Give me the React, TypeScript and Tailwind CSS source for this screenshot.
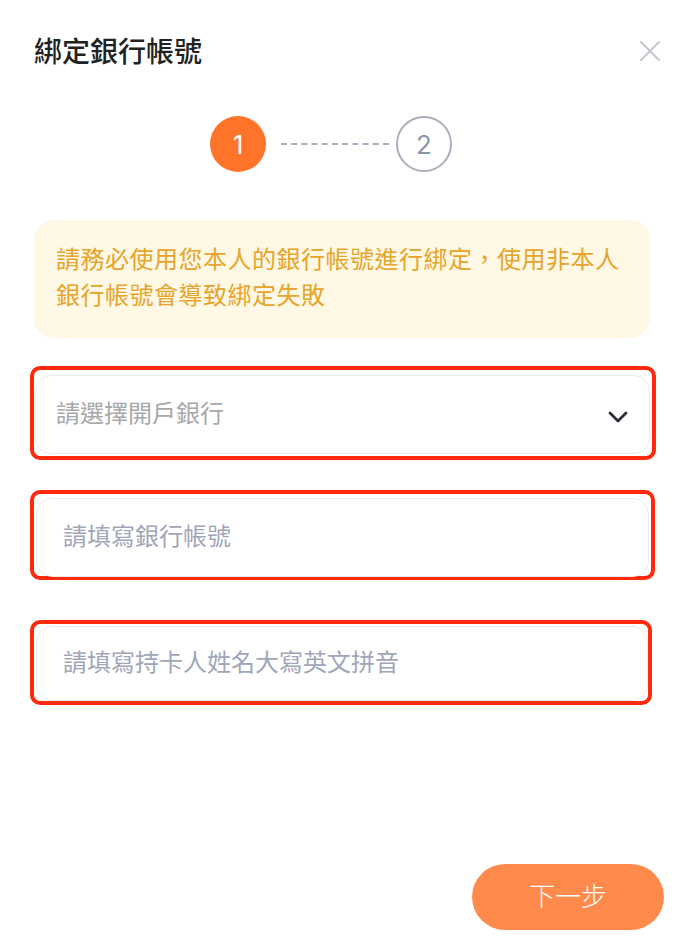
const cjk = { fontFamily: '"Noto Sans CJK TC", "Noto Sans", sans-serif' };

function Stepper() {
  return (
    <div className="flex items-center ml-[176px] mt-[48px] h-[56px]">
      <div className="w-[56px] h-[56px] rounded-full bg-[#ff7429] flex items-center justify-center text-white text-[26px] font-['Inter',sans-serif]">
        1
      </div>
      <div className="ml-[15px] mr-[7px] w-[108px] border-t-2 border-dashed border-[#a9afc0]" />
      <div className="w-[56px] h-[56px] rounded-full border-2 border-[#a9afc0] flex items-center justify-center text-[#8e95a9] text-[26px] font-['Inter',sans-serif]">
        2
      </div>
    </div>
  );
}

export default function App() {
  return (
    <div className="w-[675px] h-[941px] bg-white flex flex-col overflow-hidden" style={cjk}>
      <div className="px-[34px]">
        <div className="flex items-center justify-between pt-[36px] h-[68px] w-[626px]">
          <h1 className="text-[28px] leading-[32px] font-medium text-[#222] mt-[-4px]">綁定銀行帳號</h1>
          <svg width="20" height="20" viewBox="0 0 20 20" className="mt-[-2px]">
            <path d="M1 1 L19 19 M19 1 L1 19" stroke="#c3c7cf" strokeWidth="2" strokeLinecap="round" />
          </svg>
        </div>

        <Stepper />

        <div className="mt-[48px] w-[616px] h-[118px] rounded-[20px] bg-[#fef8e4] px-[22px] pt-[20px] text-[24px] leading-[36px] tracking-[0.5px] text-[#e6a42a]">
          請務必使用您本人的銀行帳號進行綁定，使用非本人銀行帳號會導致綁定失敗
        </div>

        <div className="mt-[28px] ml-[-4px] w-[626px] h-[94px] border-4 border-[#ff2a0e] rounded-[10px] pl-[1px] pt-[5px]">
          <div className="w-[615px] h-[79px] border border-[#ebebeb] rounded-[16px] flex items-center justify-between pl-[20px] pr-[21px]">
            <span className="text-[24px] text-[#a8a8a8] mb-[6px]">請選擇開戶銀行</span>
            <svg width="20" height="12" viewBox="0 0 20 12" className="mt-[4px]">
              <path d="M2 2 L10 10 L18 2" fill="none" stroke="#2b2f36" strokeWidth="2.8" strokeLinecap="round" strokeLinejoin="round" />
            </svg>
          </div>
        </div>

        <div className="mt-[30px] ml-[-4px] w-[625px] h-[90px] border-4 border-[#ff2a0e] rounded-[10px] pl-[2px] pt-[4px]">
          <div className="w-[613px] h-[79px] border border-[#ebebeb] rounded-[16px] flex items-center pl-[26px]">
            <span className="text-[24px] text-[#a0a6b8] mb-[6px]">請填寫銀行帳號</span>
          </div>
        </div>

        <div className="mt-[40px] ml-[-4px] w-[622px] h-[85px] border-4 border-[#ff2a0e] rounded-[10px] pl-[2px] pt-[2px]">
          <div className="w-[612px] h-[75px] border border-[#ebebeb] rounded-[16px] flex items-center pl-[26px]">
            <span className="text-[24px] text-[#a0a6b8] mb-[6px]">請填寫持卡人姓名大寫英文拼音</span>
          </div>
        </div>
      </div>

      <div className="mt-auto flex justify-end pr-[11px] pb-[11px]">
        <button className="w-[192px] h-[66px] rounded-full bg-[#ff8a4c] text-white text-[26px] font-light pb-[5px]">
          下一步
        </button>
      </div>
    </div>
  );
}
